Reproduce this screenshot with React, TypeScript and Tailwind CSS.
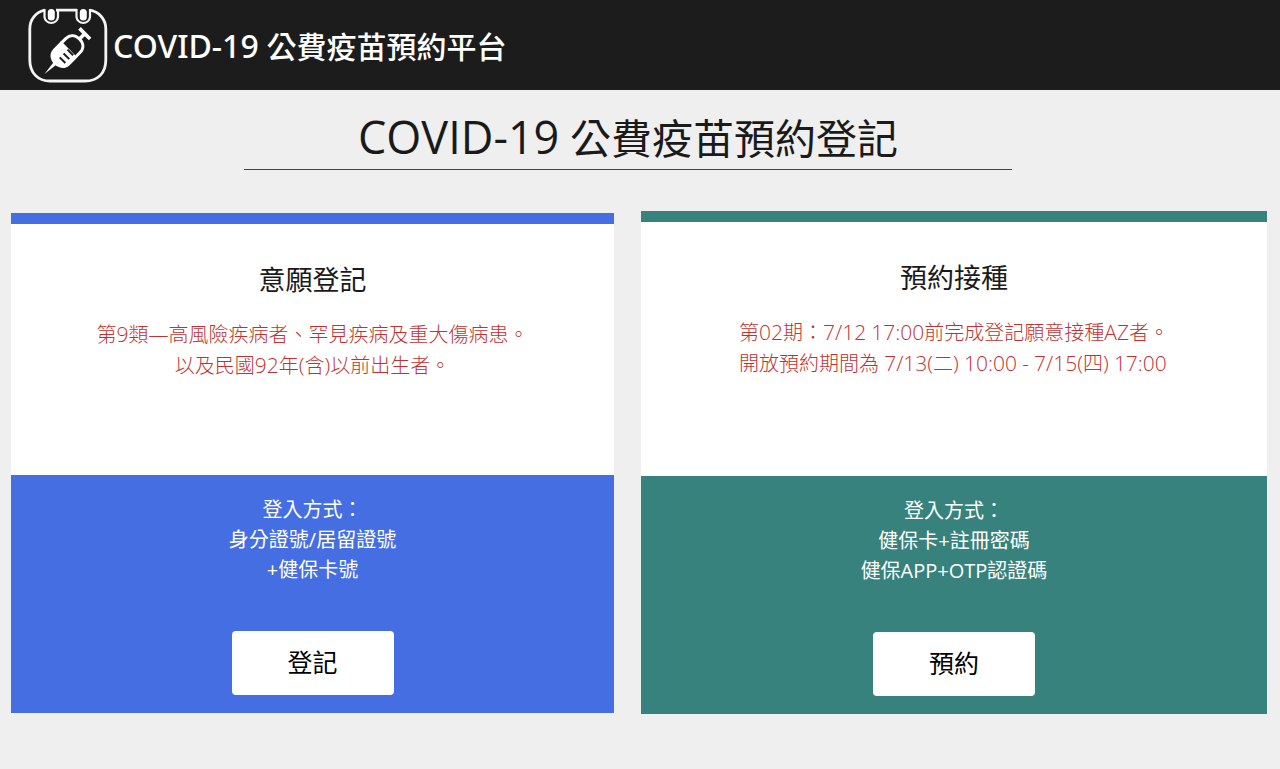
import type { ReactNode } from "react";

type CardProps = {
  title: string;
  notice: string[];
  noticeClass: string;
  methods: string[];
  action: string;
  barClass: string;
  bodyClass: string;
  footerClass: string;
  className: string;
};

function Latin({ children, className }: { children: ReactNode; className: string }) {
  return <span className={className}>{children}</span>;
}

function MixedLine({ text }: { text: string }) {
  return (
    <p>
      {text.split(/([\x21-\x7e]+)/).map((part, i) =>
        i % 2 === 1 ? (
          <Latin key={i} className="text-[21px]">
            {part}
          </Latin>
        ) : (
          part
        ),
      )}
    </p>
  );
}

function Logo() {
  return (
    <svg viewBox="0 0 80 76" className="h-[76px] w-20 shrink-0" fill="none" aria-hidden="true">
      <path
        d="M28 3.200H49M17 3.200C8 5 1.800 12 1.800 22V53C1.800 66 10 74 22 74H57C70 74 77.800 66 77.800 53V22C77.800 12 71 5 62 3.200"
        stroke="#f4f4f4"
        strokeWidth="2.800"
      />
      <path
        d="M16.500 2V10A6.800 6.800 0 0 0 30 10V2M48.500 2V10A6.800 6.800 0 0 0 62 10V2"
        stroke="#f4f4f4"
        strokeWidth="2.200"
      />
      <rect x="19.800" y="2" width="7" height="11.500" rx="3.500" fill="#fff" />
      <rect x="51.800" y="2" width="7" height="11.500" rx="3.500" fill="#fff" />
      <g transform="translate(16.500 67) rotate(45)">
        <path d="M0 0L-2 -16H2Z" fill="#fff" />
        <path d="M-2 -14C-8 -15 -11.500 -19 -11.500 -24V-35H11.500V-24C11.500 -19 8 -15 2 -14Z" fill="#fff" />
        <path d="M-10 -34V-40C-10 -46 -6 -49.500 0 -49.500C6 -49.500 10 -46 10 -40V-34" stroke="#fff" strokeWidth="3" />
        <path d="M0 -49V-57M-7.500 -57H7.500" stroke="#fff" strokeWidth="3.600" />
        <path d="M-1 -22.500H7M-1 -28H7M-1 -33.500H7" stroke="#1c1c1c" strokeWidth="2" />
      </g>
    </svg>
  );
}

function Card(props: CardProps) {
  return (
    <section className={`flex flex-col ${props.className}`}>
      <div className={`h-[11px] ${props.barClass}`} />
      <div className={`bg-white px-4 pt-9 ${props.bodyClass}`}>
        <h2 className="text-center text-[27px] leading-10 text-[#1a1a1a]">{props.title}</h2>
        <div
          className={`mx-auto mt-[19px] w-fit text-xl leading-[30px] font-light text-[#c4302f] ${props.noticeClass}`}
        >
          {props.notice.map((line) => (
            <MixedLine key={line} text={line} />
          ))}
        </div>
      </div>
      <div className={`flex flex-col items-center px-4 pt-5 pb-[18px] ${props.footerClass}`}>
        <div className="text-center text-xl leading-[30px] text-white">
          {props.methods.map((line) => (
            <p key={line}>{line}</p>
          ))}
        </div>
        <button type="button" className="mt-[46px] h-16 w-[162px] rounded bg-white text-[25px] text-black">
          {props.action}
        </button>
      </div>
    </section>
  );
}

export default function App() {
  return (
    <div
      lang="zh-Hant"
      className="min-h-screen bg-[#efefef] font-['Open_Sans','Noto_Sans_CJK_TC',sans-serif]"
    >
      <header className="flex h-[90px] items-center gap-[5px] bg-[#1c1c1c] pl-7 text-white">
        <Logo />
        <p className="pt-0.5 text-[30px] leading-10 font-medium">
          <Latin className="font-['Noto_Sans'] text-[32px]">COVID-19</Latin> 公費疫苗預約平台
        </p>
      </header>
      <main>
        <div className="pr-6">
          <h1 className="mx-auto w-3/5 min-w-[768px] border-b border-[#444444] pt-[19px] pb-[3px] text-center text-[41px] leading-[55px] whitespace-nowrap text-[#1a1a1a]">
            <Latin className="text-[45px]">COVID-19</Latin> 公費疫苗預約登記
          </h1>
        </div>
        <div className="grid grid-cols-[603fr_626fr] items-start gap-[27px] pt-[41px] pr-[13px] pb-8 pl-[11px]">
          <Card
            className="pt-0.5"
            title="意願登記"
            notice={["第9類—高風險疾病者、罕見疾病及重大傷病患。", "以及民國92年(含)以前出生者。"]}
            noticeClass="text-center"
            methods={["登入方式：", "身分證號/居留證號", "+健保卡號"]}
            action="登記"
            barClass="bg-[#466ee3]"
            bodyClass="min-h-[251px]"
            footerClass="bg-[#466ee3]"
          />
          <Card
            className=""
            title="預約接種"
            notice={["第02期：7/12 17:00前完成登記願意接種AZ者。", "開放預約期間為 7/13(二) 10:00 - 7/15(四) 17:00"]}
            noticeClass="text-left"
            methods={["登入方式：", "健保卡+註冊密碼", "健保APP+OTP認證碼"]}
            action="預約"
            barClass="bg-[#37827c]"
            bodyClass="min-h-[254px]"
            footerClass="bg-[#37827c]"
          />
        </div>
      </main>
    </div>
  );
}
